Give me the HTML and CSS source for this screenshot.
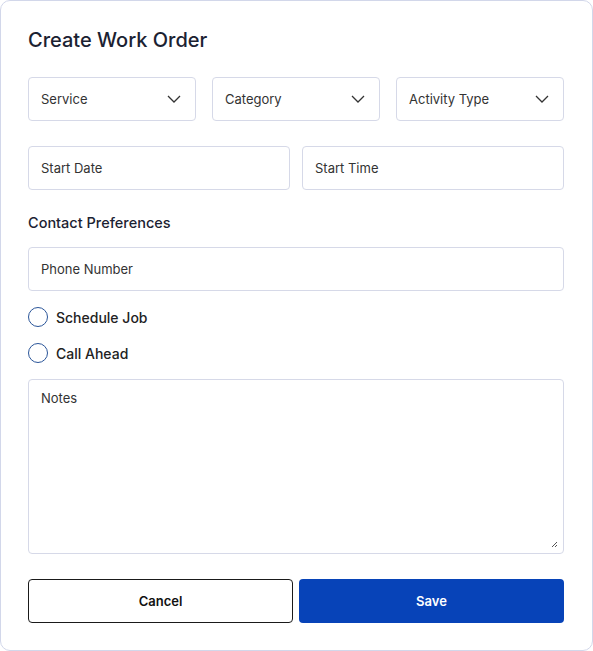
FILE: index.html
```html
<!DOCTYPE html>
<html lang="en">
<head>
  <meta charset="UTF-8">
  <meta name="viewport" content="width=device-width, initial-scale=1.0">
  <title>Create Work Order</title>
  <link rel="stylesheet" href="styles.css">
</head>
<body>

<div class="card">
  <h2 class="title">Create Work Order</h2>

  <div class="row row-3">
    <div class="field select">
      <span>Service</span>
      <svg class="chev" width="14" height="8" viewBox="0 0 14 8"><path d="M1 1l6 6 6-6" fill="none" stroke="#333" stroke-width="1.3"/></svg>
    </div>
    <div class="field select">
      <span>Category</span>
      <svg class="chev" width="14" height="8" viewBox="0 0 14 8"><path d="M1 1l6 6 6-6" fill="none" stroke="#333" stroke-width="1.3"/></svg>
    </div>
    <div class="field select">
      <span>Activity Type</span>
      <svg class="chev" width="14" height="8" viewBox="0 0 14 8"><path d="M1 1l6 6 6-6" fill="none" stroke="#333" stroke-width="1.3"/></svg>
    </div>
  </div>

  <div class="row row-2">
    <div class="field">Start Date</div>
    <div class="field">Start Time</div>
  </div>

  <h3 class="section">Contact Preferences</h3>

  <div class="field phone">Phone Number</div>

  <label class="radio"><span class="dot"></span>Schedule Job</label>
  <label class="radio"><span class="dot"></span>Call Ahead</label>

  <div class="field notes">
    Notes
    <svg class="grip" width="7" height="7" viewBox="0 0 7 7"><path d="M6 1L1 6M6 4L4 6" stroke="#555" stroke-width="1"/></svg>
  </div>

  <div class="actions">
    <button class="btn cancel">Cancel</button>
    <button class="btn save">Save</button>
  </div>
</div>

</body>
</html>
```

FILE: styles.css
```css
* {
  box-sizing: border-box;
}

body {
  margin: 0;
  font-family: Inter, "Noto Sans", sans-serif;
  background-color: #fff;
}

.card {
  width: 593px;
  height: 651px;
  border: 1px solid #d2d7ea;
  border-radius: 10px;
  padding: 27px 28px 0 27px;
}

.title {
  margin: 0 0 25px;
  font-size: 20px;
  font-weight: 500;
  color: #1b2232;
  line-height: 24px;
}

.row {
  display: grid;
}

.row-3 {
  grid-template-columns: repeat(3, 1fr);
  gap: 16px;
  margin-bottom: 25px;
}

.row-2 {
  grid-template-columns: 1fr 1fr;
  gap: 12px;
}

.field {
  height: 44px;
  border: 1px solid #d6d9e8;
  border-radius: 4px;
  padding: 0 12px;
  display: flex;
  align-items: center;
  font-size: 13px;
  color: #333;
}

.select {
  justify-content: space-between;
  padding-right: 14px;
}

.section {
  margin: 24px 0 15px;
  font-size: 14.5px;
  font-weight: 500;
  color: #1b2232;
  line-height: 18px;
}

.phone {
  margin-bottom: 16px;
}

.radio {
  display: flex;
  align-items: center;
  gap: 8px;
  height: 20px;
  margin-bottom: 16px;
  font-size: 14px;
  font-weight: 500;
  color: #222;
}

.dot {
  width: 20px;
  height: 20px;
  border: 1.5px solid #2a5599;
  border-radius: 50%;
}

.notes {
  position: relative;
  height: 175px;
  align-items: flex-start;
  padding-top: 10px;
}

.grip {
  position: absolute;
  right: 5px;
  bottom: 5px;
}

.actions {
  display: flex;
  gap: 6px;
  margin-top: 25px;
}

.btn {
  height: 44px;
  border-radius: 4px;
  font-family: inherit;
  font-size: 13px;
  font-weight: 600;
}

.cancel {
  width: 265px;
  background-color: #fff;
  border: 1px solid #1a1a1a;
  color: #111;
}

.save {
  flex: 1;
  background-color: #0743b8;
  border: none;
  color: #fff;
}
```
